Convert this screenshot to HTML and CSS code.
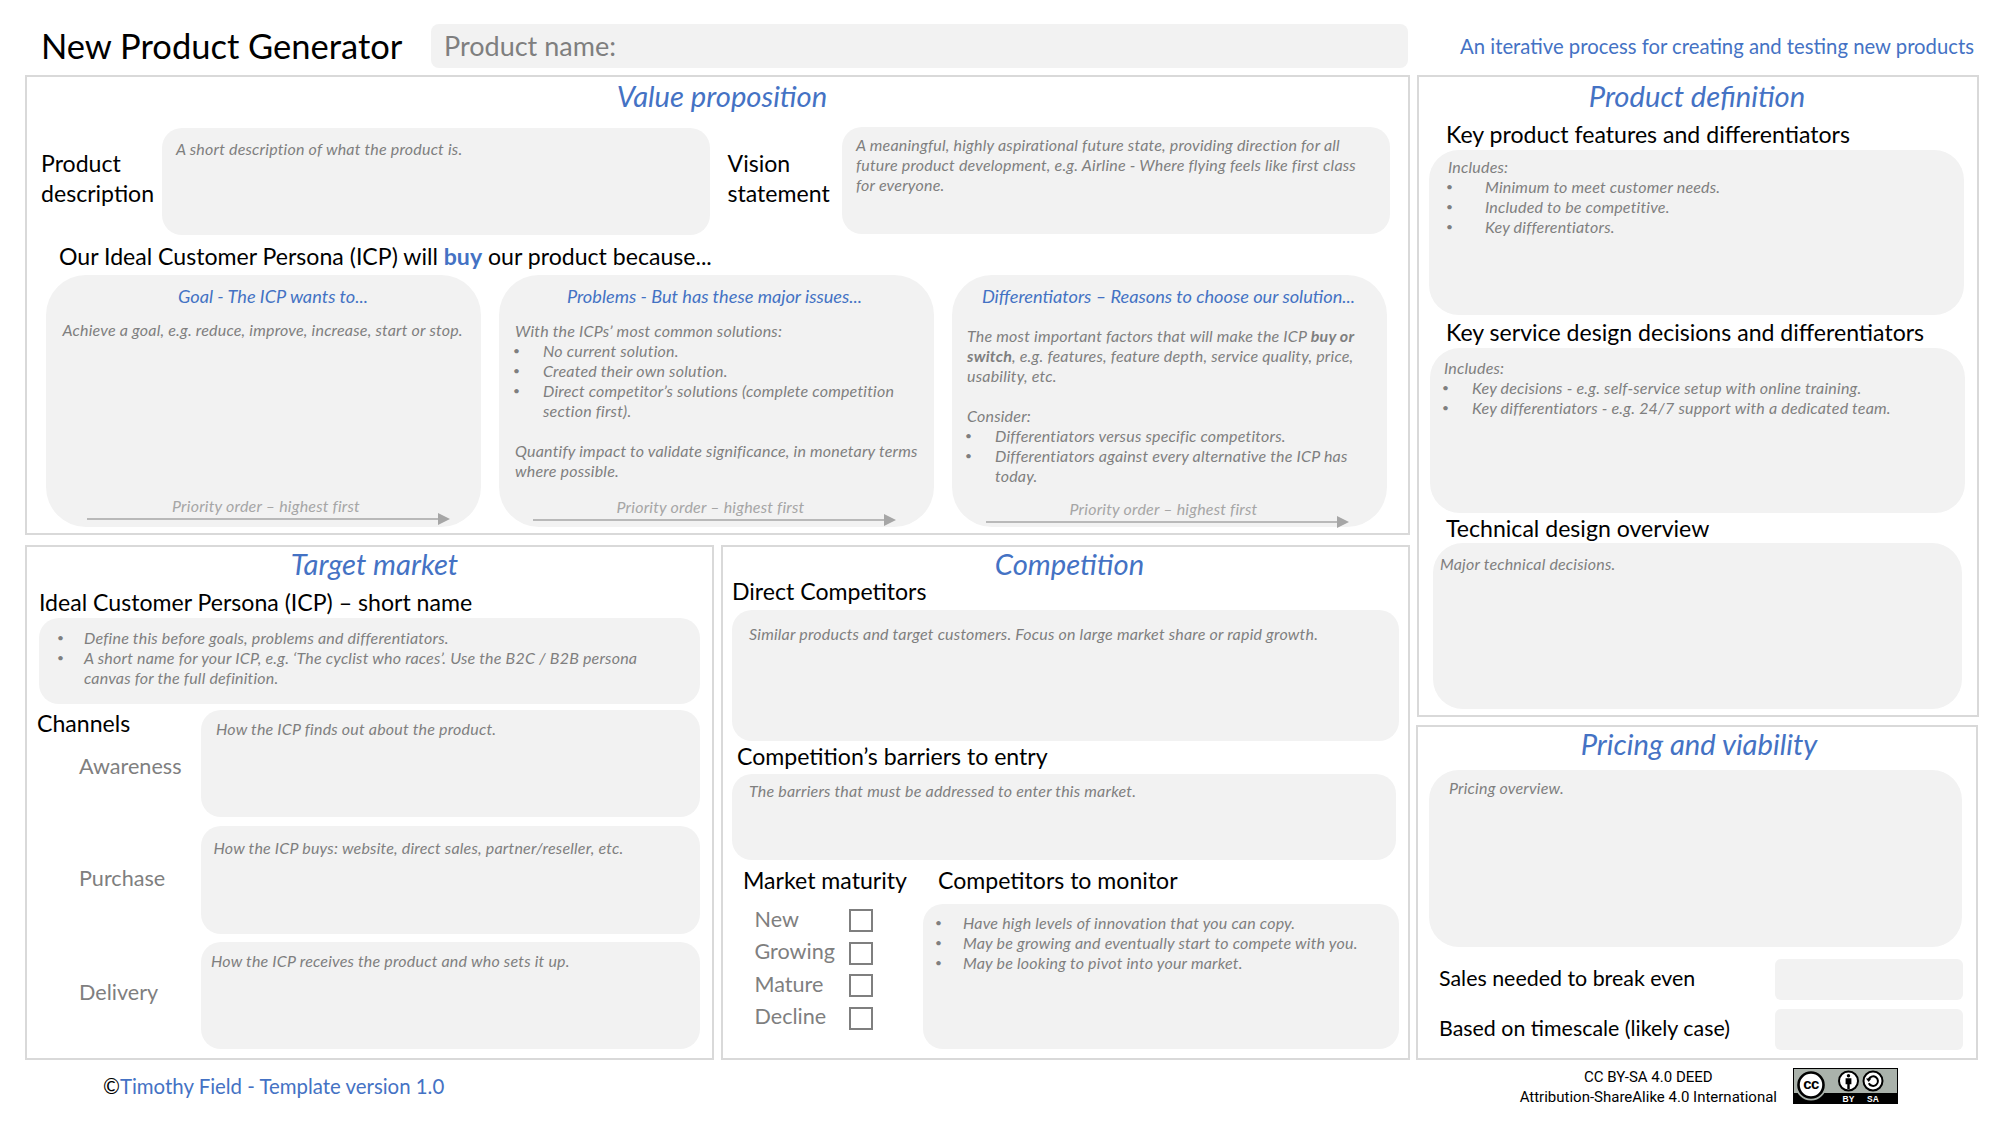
FILE: index.html
```html
<!DOCTYPE html>
<html lang="en">
<head>
<meta charset="utf-8">
<title>New Product Generator</title>
<link rel="stylesheet" href="styles.css">
</head>
<body>
<svg class="defs" width="0" height="0" aria-hidden="true"><defs>
<g id="arrow"><line x1="0" y1="6" x2="352" y2="6" stroke="#a6a6a6" stroke-width="1.6"/><polygon points="351,0 363,6 351,12" fill="#a6a6a6"/></g>
</defs></svg>
<div class="page">
<header class="header">
  <h1 class="title">New Product Generator</h1>
  <div class="product-name">Product name:</div>
  <div class="tagline">An iterative process for creating and testing new products</div>
</header>
<main class="board">
  <div class="left">
    <section class="panel vp">
      <h2 class="heading vp-h">Value proposition</h2>
      <div class="vp-row">
        <div class="label two">Product description</div>
        <div class="box small desc">A short description of what the product is.</div>
        <div class="label two vision">Vision statement</div>
        <div class="box small vis">A meaningful, highly aspirational future state, providing direction for all future product development, e.g. Airline - Where flying feels like first class for everyone.</div>
      </div>
      <div class="label because">Our Ideal Customer Persona (ICP) will <b class="blue">buy</b> our product because...</div>
      <div class="cards">
        <article class="card card-goal">
          <h3 class="card-h">Goal - The ICP wants to...</h3>
          <div class="small card-body">Achieve a goal, e.g. reduce, improve, increase, start or stop.</div>
          <div class="priority"><div class="pri-text">Priority order – highest first</div><svg class="arrow" width="363" height="12"><use href="#arrow"/></svg></div>
        </article>
        <article class="card card-prob">
          <h3 class="card-h">Problems - But has these major issues...</h3>
          <div class="small card-body">
            <p>With the ICPs’ most common solutions:</p>
            <ul class="list i28">
              <li>No current solution.</li>
              <li>Created their own solution.</li>
              <li>Direct competitor’s solutions (complete competition section first).</li>
            </ul>
            <p class="para-gap">Quantify impact to validate significance, in monetary terms where possible.</p>
          </div>
          <div class="priority"><div class="pri-text">Priority order – highest first</div><svg class="arrow" width="363" height="12"><use href="#arrow"/></svg></div>
        </article>
        <article class="card card-diff">
          <h3 class="card-h">Differentiators – Reasons to choose our solution...</h3>
          <div class="small card-body">
            <p>The most important factors that will make the ICP <b>buy or switch</b>, e.g. features, feature depth, service quality, price, usability, etc.</p>
            <p class="para-gap">Consider:</p>
            <ul class="list i28">
              <li>Differentiators versus specific competitors.</li>
              <li>Differentiators against every alternative the ICP has today.</li>
            </ul>
          </div>
          <div class="priority"><div class="pri-text">Priority order – highest first</div><svg class="arrow" width="363" height="12"><use href="#arrow"/></svg></div>
        </article>
      </div>
    </section>

    <section class="panel target">
      <h2 class="heading target-h">Target market</h2>
      <div class="label icp-l">Ideal Customer Persona (ICP) – short name</div>
      <div class="box small icp-b">
        <ul class="list i25">
          <li>Define this before goals, problems and differentiators.</li>
          <li>A short name for your ICP, e.g. ‘The cyclist who races’. Use the B2C / B2B persona canvas for the full definition.</li>
        </ul>
      </div>
      <div class="channels">
        <div class="ch-cell">
          <div class="label ch-title">Channels</div>
          <div class="sub aware">Awareness</div>
        </div>
        <div class="box small ch1">How the ICP finds out about the product.</div>
        <div class="ch-cell"><div class="sub purch">Purchase</div></div>
        <div class="box small ch2">How the ICP buys: website, direct sales, partner/reseller, etc.</div>
        <div class="ch-cell"><div class="sub deliv">Delivery</div></div>
        <div class="box small ch3">How the ICP receives the product and who sets it up.</div>
      </div>
    </section>

    <section class="panel comp">
      <h2 class="heading comp-h">Competition</h2>
      <div class="label direct-l">Direct Competitors</div>
      <div class="box small direct-b">Similar products and target customers. Focus on large market share or rapid growth.</div>
      <div class="label barrier-l">Competition’s barriers to entry</div>
      <div class="box small barrier-b">The barriers that must be addressed to enter this market.</div>
      <div class="comp-bottom">
        <div class="maturity">
          <div class="label mat-l">Market maturity</div>
          <div class="mat-rows">
            <div class="mat-row"><span class="sub mat-name">New</span><span class="check"></span></div>
            <div class="mat-row"><span class="sub mat-name">Growing</span><span class="check"></span></div>
            <div class="mat-row"><span class="sub mat-name">Mature</span><span class="check"></span></div>
            <div class="mat-row"><span class="sub mat-name">Decline</span><span class="check"></span></div>
          </div>
        </div>
        <div class="monitor">
          <div class="label mon-l">Competitors to monitor</div>
          <div class="box small mon-b">
            <ul class="list i26">
              <li>Have high levels of innovation that you can copy.</li>
              <li>May be growing and eventually start to compete with you.</li>
              <li>May be looking to pivot into your market.</li>
            </ul>
          </div>
        </div>
      </div>
    </section>
  </div>

  <div class="right">
    <section class="panel pd">
      <h2 class="heading pd-h">Product definition</h2>
      <div class="label kp-l">Key product features and differentiators</div>
      <div class="box small kp-b">
        <p>Includes:</p>
        <ul class="list i37">
          <li>Minimum to meet customer needs.</li>
          <li>Included to be competitive.</li>
          <li>Key differentiators.</li>
        </ul>
      </div>
      <div class="label ks-l">Key service design decisions and differentiators</div>
      <div class="box small ks-b">
        <p>Includes:</p>
        <ul class="list i28">
          <li>Key decisions - e.g. self-service setup with online training.</li>
          <li>Key differentiators - e.g. 24/7 support with a dedicated team.</li>
        </ul>
      </div>
      <div class="label td-l">Technical design overview</div>
      <div class="box small td-b">Major technical decisions.</div>
    </section>
    <section class="panel pricing">
      <h2 class="heading pr-h">Pricing and viability</h2>
      <div class="box small pr-b">Pricing overview.</div>
      <div class="pr-row first"><div class="label pr-l">Sales needed to break even</div><div class="pr-input"></div></div>
      <div class="pr-row"><div class="label pr-l">Based on timescale (likely case)</div><div class="pr-input"></div></div>
    </section>
  </div>
</main>
<footer class="footer">
  <div class="credit"><span class="copy">©</span>Timothy Field - Template version 1.0</div>
  <div class="license">CC BY-SA 4.0 DEED<br>Attribution-ShareAlike 4.0 International</div>
  <svg class="badge" width="105" height="36" viewBox="0 0 105 36" role="img" aria-label="CC BY-SA">
    <rect x="0.5" y="0.5" width="104" height="35" fill="#aab2ab" stroke="#000"/>
    <rect x="0" y="25" width="105" height="11" fill="#000"/>
    <circle cx="18" cy="17" r="15.5" fill="#aab2ab"/>
    <circle cx="18" cy="17" r="12.5" fill="#fff" stroke="#000" stroke-width="2.6"/>
    <text x="18" y="21" class="badge-cc" text-anchor="middle">cc</text>
    <circle cx="55.5" cy="13" r="9.5" fill="#fff" stroke="#000" stroke-width="2"/>
    <circle cx="55.5" cy="7.8" r="1.7" fill="#000"/>
    <path d="M52.6 10.2h5.8v6h-1.7v5h-2.4v-5h-1.7z" fill="#000"/>
    <circle cx="80" cy="13" r="9.5" fill="#fff" stroke="#000" stroke-width="2"/>
    <path d="M75.6 11.6a4.8 4.8 0 1 1 .2 3.6" fill="none" stroke="#000" stroke-width="2"/>
    <polygon points="73,10.6 78.4,10.6 75.7,14" fill="#000"/>
    <text x="55.5" y="33.8" class="badge-t" text-anchor="middle">BY</text>
    <text x="80" y="33.8" class="badge-t" text-anchor="middle">SA</text>
  </svg>
</footer>
</div>
</body>
</html>
```
FILE: styles.css
```css
* { box-sizing: border-box; }
html, body { margin: 0; padding: 0; background: #fff; }
body { font-family: "Lato", "Open Sans", sans-serif; color: #000; }
h1, h2, h3, p, ul { margin: 0; padding: 0; font-weight: normal; }
.defs { position: absolute; }
.page { width: 2000px; height: 1125px; padding: 24px 21px 0 25px; overflow: hidden; }

/* header */
.header { display: flex; align-items: center; height: 44px; }
.title { flex: none; width: 406px; padding-left: 16px; font-size: 34.5px; line-height: 44px; white-space: nowrap; }
.product-name { flex: none; width: 977px; height: 44px; padding-left: 13px; background: #f2f2f2; border-radius: 8px; color: #7f7f7f; font-size: 27px; line-height: 44px; }
.tagline { flex: none; margin-left: auto; padding-right: 5px; color: #4472c4; font-size: 20.3px; line-height: 24px; white-space: nowrap; }

/* board */
.board { display: grid; grid-template-columns: 1385px 563px; column-gap: 6px; margin-top: 7px; }
.left { display: grid; grid-template-columns: 689px 689px; grid-template-rows: 460px 515px; gap: 10px 7px; }
.right { display: flex; flex-direction: column; gap: 8px; }
.panel { border: 2px solid #d9d9d9; display: flex; flex-direction: column; min-width: 0; }
.vp { grid-column: 1 / 3; }
.pd { height: 642px; width: 562px; margin-left: 1px; }
.pricing { height: 335px; width: 562px; }

.heading { color: #4472c4; font-style: italic; font-size: 29.2px; line-height: 34px; text-align: center; white-space: nowrap; }
.vp-h { margin-top: 2px; padding-left: 9px; }
.target-h { padding-left: 10px; }
.comp-h { padding-left: 8px; }
.pd-h { margin-top: 2px; padding-right: 2px; }
.pr-h { padding-left: 4px; }

.label { font-size: 23.1px; line-height: 26px; white-space: nowrap; }
.label.two { white-space: normal; line-height: 30px; margin-top: 21px; }
.sub { color: #7f7f7f; font-size: 21.6px; line-height: 24px; }
.blue { color: #4472c4; }

.box { background: #f2f2f2; border-radius: 20px; }
.small { color: #7f7f7f; font-style: italic; font-size: 16px; line-height: 20px; letter-spacing: 0.2px; }
.list { list-style: none; --ind: 28px; }
.list li { display: flex; }
.list li::before { content: "•"; flex: 0 0 calc(var(--ind) + 2px); margin-left: -2px; font-style: normal; font-size: 12px; }
.i25 { --ind: 25px; }
.i26 { --ind: 26px; }
.i28 { --ind: 28px; }
.i37 { --ind: 37px; }
.para-gap { margin-top: 20px; }

/* value proposition */
.vp-row { display: flex; align-items: flex-start; height: 108px; margin: 14px 0 0 14px; }
.vp-row > .two { flex: none; width: 121px; }
.vp-row > .vision { width: 114.5px; margin-left: 17.5px; }
.desc { flex: none; width: 548px; height: 107px; margin-top: 1px; padding: 11px 14px; }
.vis { flex: none; width: 548px; height: 107px; padding: 7.5px 18px 0 14px; }
.because { margin: 8px 0 0 32px; }
.cards { display: flex; gap: 18px; margin: 6px 0 0 19px; }
.card { flex: none; display: flex; flex-direction: column; width: 435px; height: 252px; padding-top: 12px; background: #f2f2f2; border-radius: 40px; }
.card-h { color: #4472c4; font-style: italic; font-size: 18.2px; line-height: 18px; margin-bottom: 2px; text-align: center; white-space: nowrap; }
.card-goal .card-h { padding-left: 19px; }
.card-prob .card-h { padding-right: 4px; }
.card-diff .card-h { padding-right: 2px; }
.card-goal .card-body { margin: 13px 16px 0 16.5px; white-space: nowrap; }
.card-prob .card-body { margin: 14px 10px 0 16px; }
.card-diff .card-body { margin: 19px 24px 0 15px; }
.priority { margin-top: auto; width: 363px; }
.pri-text { color: #a6a6a6; font-style: italic; font-size: 16px; line-height: 16px; letter-spacing: 0.2px; text-align: center; padding-right: 8px; }
.card-goal .pri-text { padding-right: 5px; }
.arrow { display: block; margin-top: -1px; }
.card-goal .priority { margin-left: 41px; margin-bottom: 2px; }
.card-prob .priority { margin-left: 34px; margin-bottom: 1px; }
.card-diff .priority { margin-left: 34px; margin-bottom: -1px; }

/* target */
.icp-l { margin: 8px 0 0 12px; }
.icp-b { width: 661px; height: 86px; margin: 3px 0 0 12px; padding: 9.5px 60px 0 20px; }
.channels { display: grid; grid-template-columns: 174px 499px; grid-template-rows: 107px 108px 107px; row-gap: 8.5px; margin-top: 6px; }
.ch-title { margin-left: 10px; }
.sub.aware { margin: 17.5px 0 0 52px; }
.sub.purch { margin: 40px 0 0 52px; }
.sub.deliv { margin: 38px 0 0 52px; }
.ch1 { padding: 9px 15px; }
.ch2 { padding: 12.5px 12.5px; }
.ch3 { padding: 9px 10px; }

/* competition */
.direct-l { margin: -3px 0 0 9px; }
.direct-b { width: 667px; height: 131px; margin: 6px 0 0 9px; padding: 13.5px 17px; }
.barrier-l { margin: 2px 0 0 14px; }
.barrier-b { width: 664px; height: 86px; margin: 5px 0 0 9px; padding: 6.5px 17px; }
.comp-bottom { display: flex; margin-top: 7px; }
.maturity { flex: none; width: 200px; }
.mat-l { margin-left: 20px; }
.mat-rows { margin: 13.5px 0 0 31.5px; }
.mat-row { display: flex; height: 32.67px; }
.mat-name { flex: none; width: 94.5px; }
.check { flex: none; width: 24px; height: 23px; margin-top: 2.5px; border: 2px solid #7f7f7f; }
.monitor { flex: none; width: 476px; }
.mon-l { margin-left: 15px; }
.mon-b { height: 145px; margin-top: 10.5px; padding: 9px 14px; }

/* product definition */
.kp-l { margin: 7.5px 0 0 27px; }
.kp-b { width: 535px; height: 165px; margin: 3.5px 0 0 10px; padding: 6.5px 19px; border-radius: 30px; }
.ks-l { margin: 4px 0 0 27px; }
.ks-b { width: 535px; height: 165px; margin: 3px 0 0 11px; padding: 10px 14px; border-radius: 30px; }
.td-l { margin: 2px 0 0 27px; }
.td-b { width: 529px; height: 166px; margin: 2px 0 0 14px; padding: 11px 7px; border-radius: 30px; }

/* pricing */
.pr-b { width: 533px; height: 177px; margin: 9px 0 0 11px; padding: 8px 20px; border-radius: 30px; }
.pr-row { display: flex; height: 41px; margin: 9px 0 0 21px; }
.pr-row.first { margin-top: 12px; }
.pr-l { flex: none; width: 336px; margin-top: 6px; font-size: 21.4px; }
.pr-input { flex: none; width: 188px; height: 41px; background: #f2f2f2; border-radius: 6px; }

/* footer */
.footer { display: flex; align-items: flex-start; padding-right: 81px; }
.credit { margin: 14px 0 0 78px; color: #4472c4; font-size: 20.4px; line-height: 24px; white-space: nowrap; }
.copy { color: #000; }
.license { margin: 7px 16px 0 auto; font-family: "Roboto", sans-serif; font-size: 15px; line-height: 20px; text-align: center; white-space: nowrap; }
.badge { display: block; flex: none; margin-top: 8px; }
.badge-cc { font-family: "Liberation Sans", sans-serif; font-weight: 700; font-size: 15px; letter-spacing: -0.5px; fill: #000; }
.badge-t { font-family: "Liberation Sans", sans-serif; font-weight: 700; font-size: 8.5px; fill: #fff; }
```
